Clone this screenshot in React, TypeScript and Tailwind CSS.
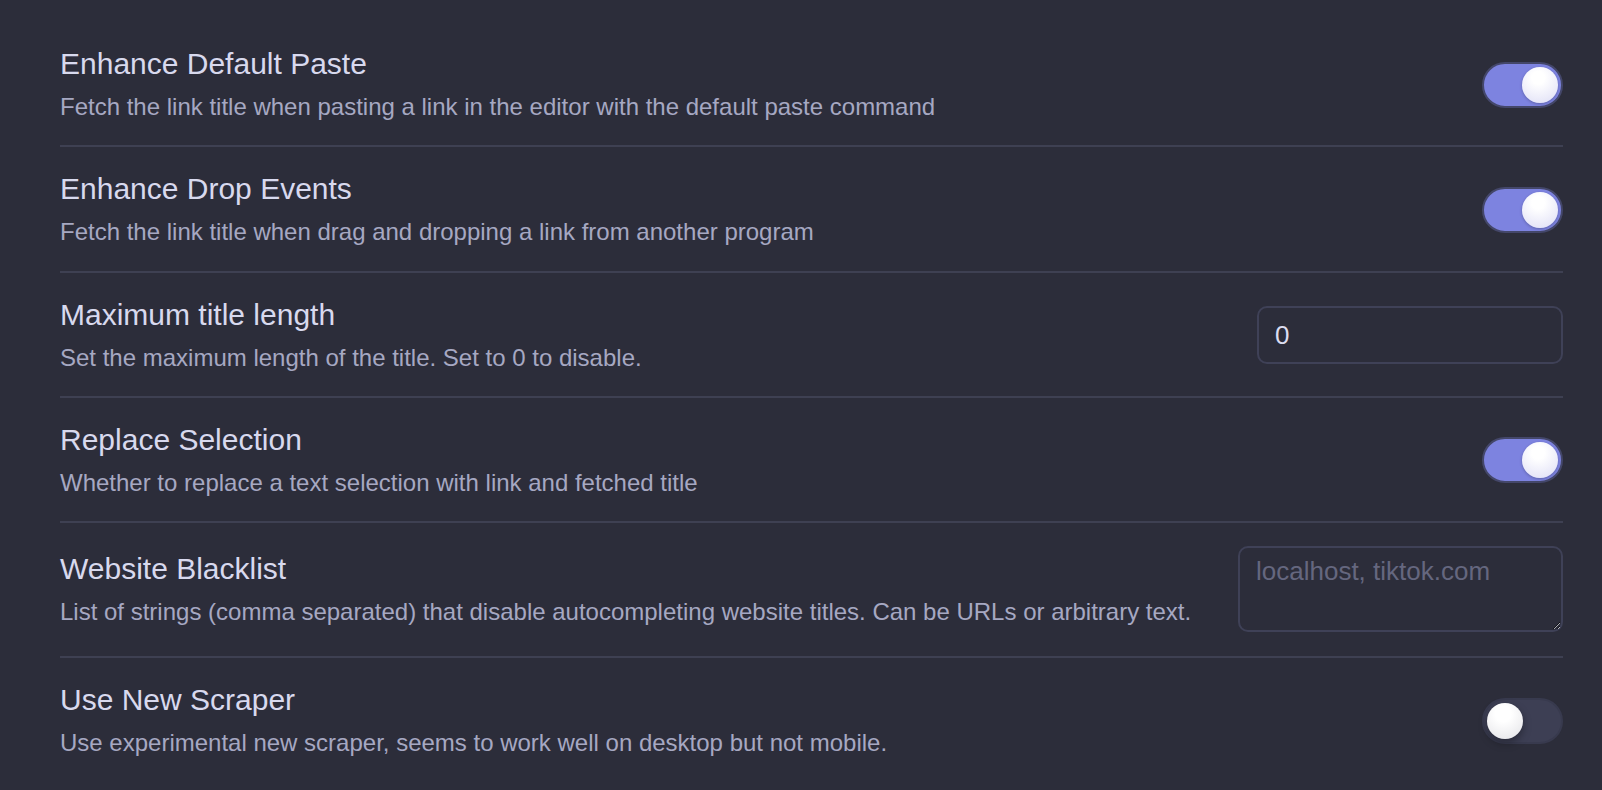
import { useState } from "react";

interface SettingProps {
  name: string;
  desc: string;
  last?: boolean;
  tall?: boolean;
  children: React.ReactNode;
}

function SettingRow({ name, desc, last, tall, children }: SettingProps) {
  return (
    <div
      className={`flex items-center gap-[40px] ${tall ? "pt-[23px] pb-[24px]" : "pt-[22px] pb-[20.25px]"} ${
        last ? "" : "border-b-2 border-[#3e4052]"
      }`}
    >
      <div className="flex-1 min-w-0">
        <div className="text-[30px] leading-[39px] text-[#d8d9ee]">{name}</div>
        <div className="mt-[6px] text-[24px] leading-[36px] text-[#a6a8c2]">{desc}</div>
      </div>
      {children}
    </div>
  );
}

function Toggle({ initial }: { initial: boolean }) {
  const [on, setOn] = useState(initial);
  return (
    <button
      onClick={() => setOn(!on)}
      className={`flex items-center w-[81px] h-[46px] shrink-0 rounded-full border-2 px-[3px] ${
        on
          ? "justify-end bg-[#7d83e0] border-[#44476a]"
          : "justify-start bg-[#3d3f54] border-[#383a4e]"
      }`}
    >
      <span
        className={`block w-[36px] h-[36px] rounded-full ${
          on
            ? "bg-[radial-gradient(circle_at_45%_30%,#ffffff_20%,#dcdcf5_100%)] shadow-[0_1px_3px_rgba(0,0,0,0.25)]"
            : "bg-[radial-gradient(circle_at_45%_30%,#ffffff_25%,#e2e2e6_100%)] shadow-[0_4px_8px_rgba(0,0,0,0.35)]"
        }`}
      />
    </button>
  );
}

export default function App() {
  return (
    <div className="min-h-[790px] bg-[#2c2d3a] pt-[22px] pl-[60px] pr-[39px] font-['Liberation_Sans',Arial,sans-serif]">
      <SettingRow
        name="Enhance Default Paste"
        desc="Fetch the link title when pasting a link in the editor with the default paste command"
      >
        <Toggle initial={true} />
      </SettingRow>
      <SettingRow
        name="Enhance Drop Events"
        desc="Fetch the link title when drag and dropping a link from another program"
      >
        <Toggle initial={true} />
      </SettingRow>
      <SettingRow
        name="Maximum title length"
        desc="Set the maximum length of the title. Set to 0 to disable."
      >
        <input
          type="text"
          defaultValue="0"
          className="w-[306px] h-[58px] shrink-0 rounded-[10px] border-2 border-[#3f4157] bg-transparent px-[16px] text-[26px] text-[#dcddf0] outline-none"
        />
      </SettingRow>
      <SettingRow
        name="Replace Selection"
        desc="Whether to replace a text selection with link and fetched title"
      >
        <Toggle initial={true} />
      </SettingRow>
      <SettingRow
        name="Website Blacklist"
        desc="List of strings (comma separated) that disable autocompleting website titles. Can be URLs or arbitrary text."
        tall
      >
        <textarea
          placeholder="localhost, tiktok.com"
          className="w-[325px] h-[86px] shrink-0 rounded-[10px] border-2 border-[#3f4157] bg-transparent px-[16px] py-[8px] text-[26px] leading-[30px] text-[#dcddf0] placeholder:text-[#65677f] outline-none"
        />
      </SettingRow>
      <SettingRow
        name="Use New Scraper"
        desc="Use experimental new scraper, seems to work well on desktop but not mobile."
        last
      >
        <Toggle initial={false} />
      </SettingRow>
    </div>
  );
}
